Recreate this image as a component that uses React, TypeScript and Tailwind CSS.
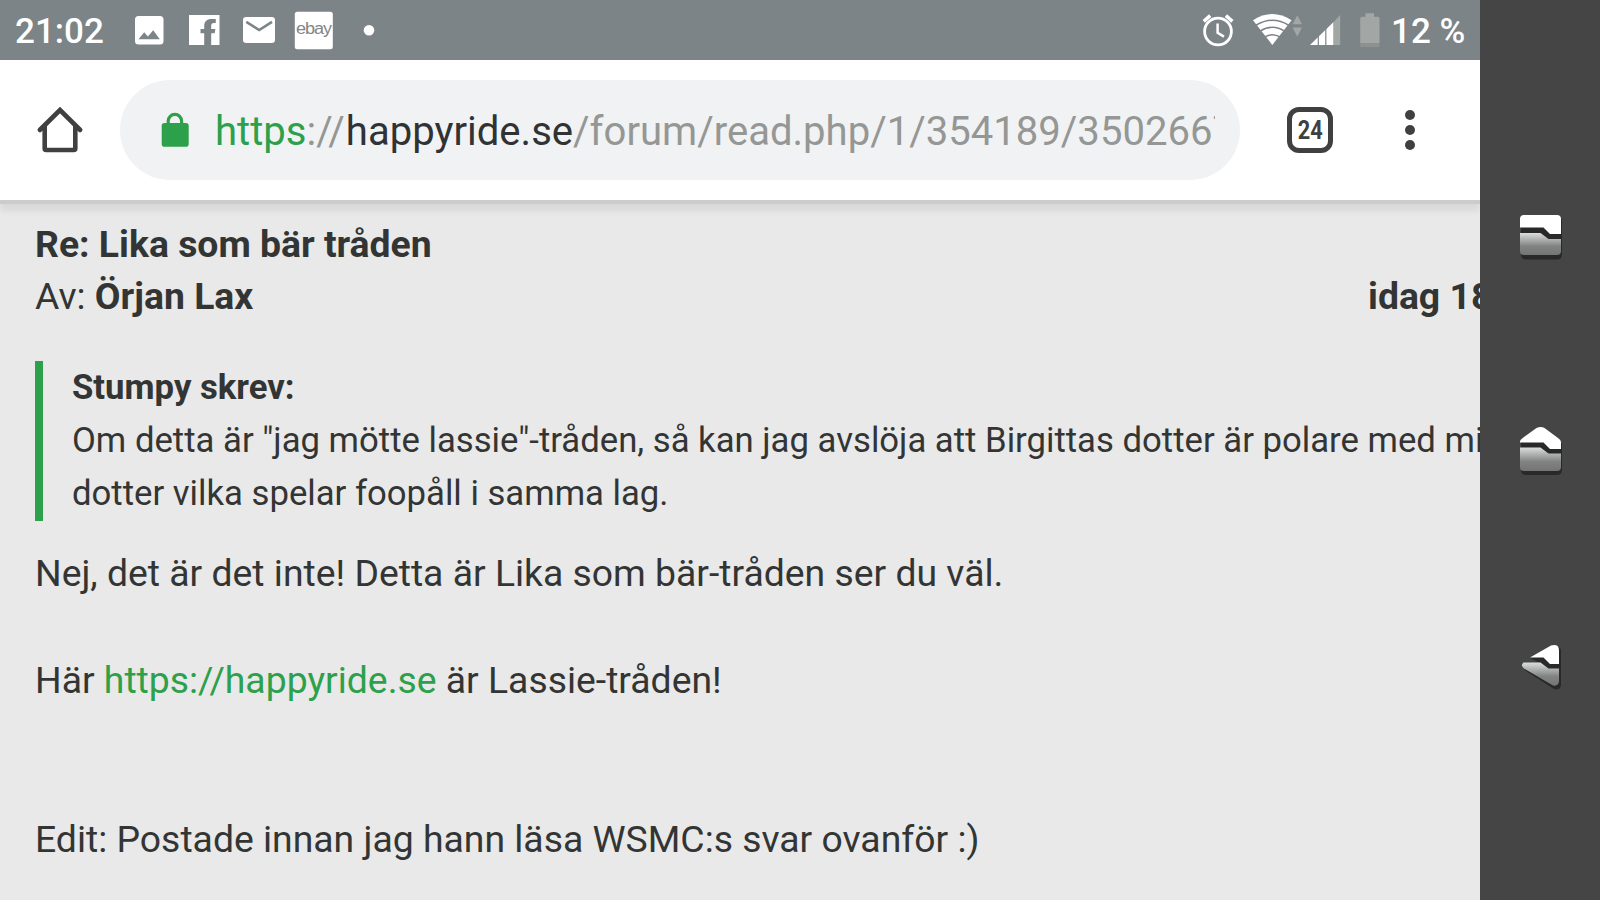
import { ReactNode } from 'react';

function StatusBar() {
    return (
        <div className="flex h-[60px] shrink-0 items-center bg-[#7c8488] pl-[15px] pr-4 text-[35px] font-medium text-white">
            <span className="w-[120px] whitespace-nowrap pt-[4px]">21:02</span>

            {/* Notifications */}
            <svg className="h-[60px] w-[245px] shrink-0" viewBox="135 0 245 60" fill="#fff">
                <path fillRule="evenodd" d="M138.500 16h21.500a3.500 3.500 0 0 1 3.500 3.500v21.500a3.500 3.500 0 0 1-3.500 3.500h-21.500a3.500 3.500 0 0 1-3.500-3.500v-21.500a3.500 3.500 0 0 1 3.500-3.500zM138.500 39.300h21.300l-6.600-9-5.300 6.300-3.700-4.400z" />
                <path d="M189 15h30.500v30h-8.300V33.300h3.400l.8-4.300h-4.200v-2.800c0-2.200.7-3.200 2.700-3.200h1.900V19h-4.200c-4.600 0-7.400 2.600-7.400 7V29h-3.700v4.300h3.700V45H189z" />
                <rect x="243" y="17" width="32" height="26" rx="3.200" />
                <path d="M246.300 21.800l12.900 8.200 12.800-8.200" fill="none" stroke="#7c8488" strokeWidth="2.600" />
                <rect x="294.800" y="11.700" width="38" height="37.600" rx="2.500" />
                <g transform="translate(296 33.500) scale(1.130 1)">
                    <text fontSize="16" fontWeight="400" letterSpacing="-0.900" fill="#858585" fontFamily="Liberation Sans, sans-serif">ebay</text>
                </g>
                <circle cx="369" cy="30.200" r="5.300" />
            </svg>

            <div className="flex-1" />

            {/* Alarm, wifi, mobile signal and battery */}
            <svg className="h-[60px] w-[190px] shrink-0" viewBox="1200 0 190 60" fill="#fff">
                <g fill="none" stroke="#fff">
                    <circle cx="1218" cy="31.500" r="13.400" strokeWidth="2.800" />
                    <path d="M1217.600 23.500v9.200l6.400 3.900" strokeWidth="2.500" />
                    <path d="M1203.700 21.300l6.500-5.600M1232.400 21.300l-6.500-5.600" strokeWidth="3.500" />
                </g>
                <path d="M1253 20.300q19.300-12.600 38.600 0L1272.300 45z" />
                <path d="M1255.500 25.500q16.800-10.400 33.600 0M1259.800 31.300q12.500-8 25 0M1264.300 37.200q8-5 16 0" fill="none" stroke="#7c8488" strokeWidth="1.500" />
                <path d="M1292.500 24.300h9.500l-4.700-9zM1292.500 27.500h9.500l-4.700 9z" fill="#a2a6a4" />
                <path d="M1333.300 22.300l6.900-7.300v30h-6.900z" fill="#a2a6a4" />
                <path d="M1310 45l23.300-22.700V45z" />
                <path d="M1318.300 34v11M1325.800 27v18" stroke="#7c8488" strokeWidth="1.200" />
                <path d="M1365.500 13.300h8.500v3.400h3.500a2 2 0 0 1 2 2V43h-19.300V18.700a2 2 0 0 1 2-2h3.300z" fill="#a2a6a4" />
                <path d="M1360.200 43h19.300v4h-19.300z" fill="#8d9190" />
            </svg>
            <span className="ml-px w-[73px] whitespace-nowrap pt-[4px]">12 %</span>
        </div>
    );
}

function Toolbar() {
    return (
        <div className="z-10 flex h-[140px] shrink-0 items-center bg-white shadow-[0_4px_0_#cbcdcc,0_11px_6px_rgba(0,0,0,0.07)]">
            <svg className="ml-9 h-12 w-12 shrink-0" viewBox="36 106 48 48" fill="none" stroke="#404040" strokeWidth="4.600" strokeLinejoin="round">
                <path d="M39.800 130L60 110l20.200 20" strokeLinecap="round" strokeLinejoin="miter" />
                <path d="M44.700 126v22.500a1.500 1.500 0 0 0 1.500 1.500h27.600a1.500 1.500 0 0 0 1.500-1.500V126" />
            </svg>

            <div className="ml-9 flex h-[100px] w-[1120px] shrink-0 items-center rounded-full bg-[#f1f2f4]">
                <svg className="ml-[41px] h-9 w-7 shrink-0" viewBox="161 112 28 36" fill="#2da04b">
                    <path d="M168.200 126v-5a6.700 6.700 0 0 1 13.400 0v5" fill="none" stroke="#2da04b" strokeWidth="3.200" />
                    <rect x="161.700" y="123" width="27" height="23.700" rx="2.800" />
                </svg>
                <div className="ml-[26px] w-[1000px] overflow-hidden whitespace-nowrap pt-[4px] text-[40.07px] leading-[56px] text-[#959794]">
                    <span className="text-[#2da04b]">https</span>://<span className="ml-px text-[#303233]">happyride.se</span>/forum/read.php/1/354189/3502667
                </div>
            </div>

            <div className="ml-[47px] flex size-[46px] shrink-0 items-center justify-center rounded-[12px] border-[5px] border-[#404040] text-[25px] font-bold text-[#404040]">
                <span className="scale-x-[0.87] pt-px">24</span>
            </div>
            <div className="ml-[72px] flex flex-col gap-[5px]">
                <span className="size-[10px] rounded-full bg-[#404040]" />
                <span className="size-[10px] rounded-full bg-[#404040]" />
                <span className="size-[10px] rounded-full bg-[#404040]" />
            </div>
        </div>
    );
}

function Line({ children }: { children?: ReactNode }) {
    return <div className="h-[53.3px] whitespace-nowrap">{children}</div>;
}

function Post() {
    return (
        <div className="flex-1 overflow-hidden bg-[#e9e9e9] pl-[35px] pt-[17.5px] text-[37.35px] leading-[53.3px] text-[#333534]">
            <div className="h-[52.5px] whitespace-nowrap"><b>Re: Lika som bär tråden</b></div>
            <div className="flex whitespace-nowrap">
                <div className="w-[1333px] shrink-0">Av: <b>Örjan Lax</b></div>
                <b>idag 18:37</b>
            </div>
            <div className="mt-[37.5px] border-l-[8px] border-[#2da04b] pl-[29px] text-[34.7px]">
                <Line><b>Stumpy skrev:</b></Line>
                <Line>Om detta är "jag mötte lassie"-tråden, så kan jag avslöja att Birgittas dotter är polare med min</Line>
                <Line>dotter vilka spelar foopåll i samma lag.</Line>
            </div>
            <div className="mt-[26.300px]">
                <Line>Nej, det är det inte! Detta är Lika som bär-tråden ser du väl.</Line>
                <Line />
                <Line>Här <a className="text-[#2da04b]">https://happyride.se</a> är Lassie-tråden!</Line>
                <Line />
                <Line />
                <Line>Edit: Postade innan jag hann läsa WSMC:s svar ovanför :)</Line>
            </div>
        </div>
    );
}

interface NavIconProps {
    id: string;
    top: string;
    bottom: string;
    shadow: string;
}

function NavIcon({ id, top, bottom, shadow }: NavIconProps) {
    return (
        <svg className="size-[50px] shrink-0" viewBox="15 20 50 50">
            <defs>
                <linearGradient id={id} x1="0" y1="0" x2="0" y2="1">
                    <stop offset="0" stopColor="#dcdedd" />
                    <stop offset="0.6" stopColor="#818382" />
                    <stop offset="1" stopColor="#747474" />
                </linearGradient>
            </defs>
            <path d={shadow} fill="#292929" />
            <path d={top} fill="#fff" />
            <path d={bottom} fill={`url(#${id})`} />
        </svg>
    );
}

function NavBar() {
    return (
        <div className="flex w-[120px] shrink-0 flex-col items-center gap-[165px] bg-[#454545] pt-[210px]">
            <NavIcon
                id="recents"
                top="M20 37.500V29q0-4 4-4h33q4 0 4 4v15H50L43.500 37.500z"
                bottom="M20 43h20.500l8 6H61v12q0 4-4 4H24q-4 0-4-4z"
                shadow="M21 31q0-4 4-4h33q4 0 4 4v33q0 5.500-5 5.500H26q-5 0-5-5z"
            />
            <NavIcon
                id="home"
                top="M20 37.500v-1.200q0-1.500 3-3.500L36.500 23q4.500-2 8 0L58 33q3 2 3 4v7H50L43.500 37.500z"
                bottom="M20 42.500h20.500l8 6H61v13.500q0 4-4 4H24q-4 0-4-4z"
                shadow="M21 37L41 25l21 14v26q0 5-5 5H26q-5 0-5-5z"
            />
            <NavIcon
                id="back"
                top="M30 37.500L51 25.500q8-2 8 5V44H50L43.500 37.500z"
                bottom="M23.500 42.500h17l8 6H59v12q0 6-6 5L24 48.500q-4-3-.5-6z"
                shadow="M30 38L54 27q7-1 7 4v34q-1 6-7 4L26 51q-4-4 2-7l14 0z"
            />
        </div>
    );
}

export default function App() {
    return (
        <div className="flex h-[900px] w-[1600px] overflow-hidden font-['Roboto',sans-serif]">
            <main className="flex w-[1480px] shrink-0 flex-col overflow-hidden">
                <StatusBar />
                <Toolbar />
                <Post />
            </main>
            <NavBar />
        </div>
    );
}
